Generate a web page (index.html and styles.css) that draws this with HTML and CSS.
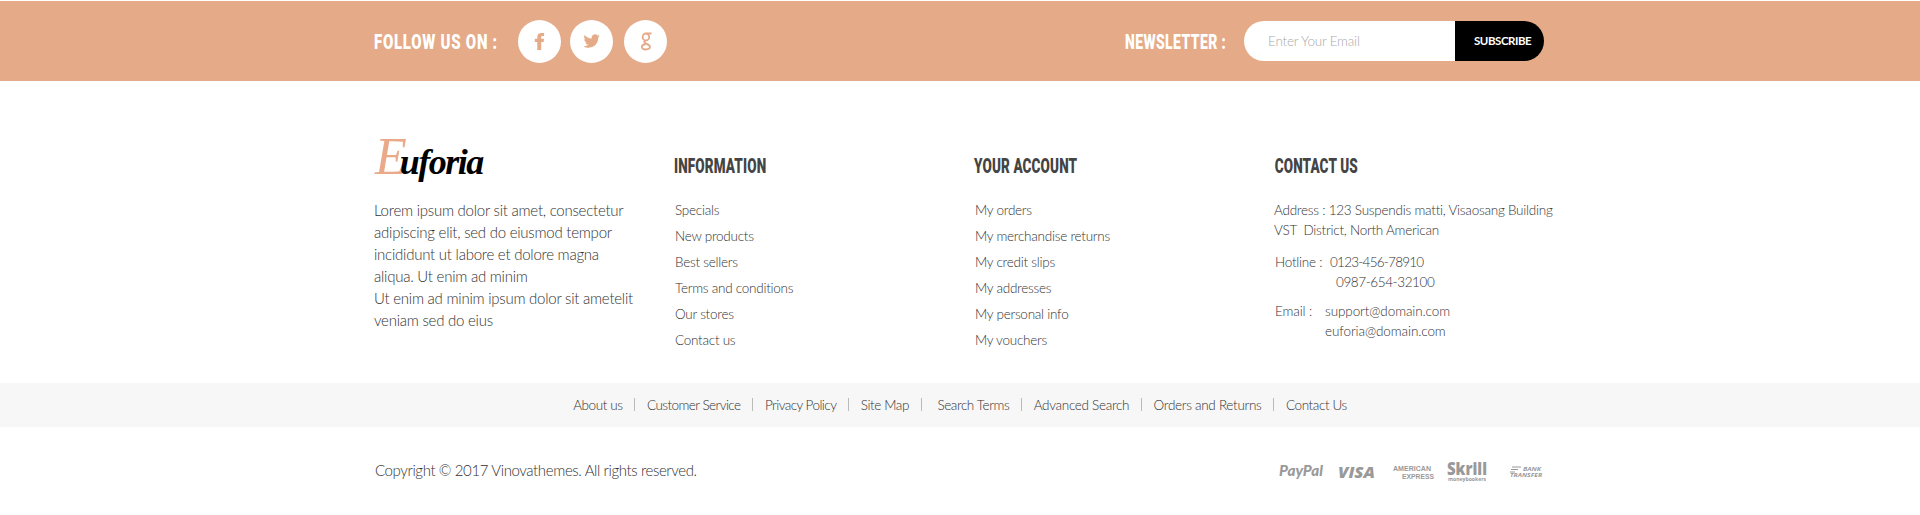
FILE: index.html
```html
<!DOCTYPE html>
<html lang="en">
<head>
<meta charset="utf-8">
<title>Euforia</title>
<link rel="stylesheet" href="styles.css">
</head>
<body>
<footer>
<section class="top">
  <h2 class="label follow">FOLLOW US ON :</h2>
  <div class="social">
    <a class="dot"><svg width="43" height="43" viewBox="0 0 43 43"><path d="M19.300 30v-8h-2.500v-3.300h2.500v-1.600c0-2.800 1.600-4.200 4.200-4.200h2.600V16h-1.600c-1 0-1.300.5-1.300 1.300v1.400h2.800l-.4 3.300h-2.400v8z"/></svg></a>
    <a class="dot"><svg width="43" height="43" viewBox="0 0 43 43"><path d="M29.900 15.900c-.6.3-1.200.5-1.900.6.7-.4 1.200-1.100 1.500-1.900-.7.4-1.400.7-2.100.8a3.400 3.400 0 0 0-5.800 3.100c-2.800-.1-5.300-1.500-7-3.500-.9 1.500-.5 3.500 1.100 4.500-.6 0-1.100-.2-1.500-.4 0 1.600 1.100 3 2.700 3.400-.5.1-1 .1-1.500 0 .4 1.300 1.700 2.300 3.100 2.300a6.800 6.800 0 0 1-5 1.400c1.500 1 3.300 1.500 5.200 1.500 6.200 0 9.800-5.200 9.500-10.100.7-.4 1.300-1 1.700-1.700z"/></svg></a>
    <a class="dot"><svg class="line" width="43" height="43" viewBox="0 0 43 43"><ellipse cx="21.900" cy="17" rx="3.300" ry="3.500"/><path d="M22.500 13.500h5M21 20.500c-1.500 1.300-.6 2.200 1.300 3.100 5.700 2.400 4.200 5.800-.3 5.900-5.200.1-5.800-4.300-.3-5.500"/></svg></a>
  </div>
  <h2 class="label news">NEWSLETTER :</h2>
  <form class="subscribe">
    <span class="field">Enter Your Email</span><span class="button">SUBSCRIBE</span>
  </form>
</section>
<section class="columns">
  <div class="about">
    <svg class="logo" width="112" height="60" viewBox="0 0 112 60"><text y="43"><tspan class="logo-cap" x="1">E</tspan><tspan class="logo-rest" dx="-7">uforia</tspan></text></svg>
    <p>Lorem ipsum dolor sit amet, consectetur<br>adipiscing elit, sed do eiusmod tempor<br>incididunt ut labore et dolore magna<br>aliqua. Ut enim ad minim<br>Ut enim ad minim ipsum dolor sit ametelit<br>veniam sed do eius</p>
  </div>
  <div class="links">
    <h3>INFORMATION</h3>
    <ul><li>Specials</li><li>New products</li><li>Best sellers</li><li>Terms and conditions</li><li>Our stores</li><li>Contact us</li></ul>
  </div>
  <div class="links">
    <h3>YOUR ACCOUNT</h3>
    <ul><li>My orders</li><li>My merchandise returns</li><li>My credit slips</li><li>My addresses</li><li>My personal info</li><li>My vouchers</li></ul>
  </div>
  <div class="contact">
    <h3>CONTACT US</h3>
    <p class="address">Address : 123 Suspendis matti, Visaosang Building<br>VST&nbsp; District, North American</p>
    <div class="row phone"><span class="term">Hotline :</span><div class="numbers">0123-456-78910<div class="second">0987-654-32100</div></div></div>
    <div class="row mail"><span class="term">Email :</span><div>support@domain.com<div>euforia@domain.com</div></div></div>
  </div>
</section>
<nav>
  <a>About us</a><i></i><a class="tight">Customer Service</a><i></i><a class="tight">Privacy Policy</a><i></i><a>Site Map</a><i></i><a class="wide">Search Terms</a><i></i><a class="loose">Advanced Search</a><i></i><a class="loose">Orders and Returns</a><i></i><a>Contact Us</a>
</nav>
<section class="bottom">
  <p>Copyright © 2017 Vinovathemes. All rights reserved.</p>
  <svg class="pay" width="270" height="30" viewBox="0 0 270 30">
    <text class="paypal" x="0" y="20" textLength="44" lengthAdjust="spacingAndGlyphs">PayPal</text>
    <text class="visa" x="59" y="21.500" textLength="37" lengthAdjust="spacingAndGlyphs">VISA</text>
    <text class="amex" x="114" y="14.500" textLength="38" lengthAdjust="spacingAndGlyphs">AMERICAN</text>
    <text class="amex" x="123" y="22.500" textLength="32" lengthAdjust="spacingAndGlyphs">EXPRESS</text>
    <text class="skrill" x="168" y="18.500" textLength="40" lengthAdjust="spacingAndGlyphs">Skrill</text>
    <text class="money" x="169" y="25" textLength="38" lengthAdjust="spacingAndGlyphs">moneybookers</text>
    <path d="M233 11h9M232 13.500h7M231 16h5" />
    <text class="bank" x="244" y="14.500" textLength="18" lengthAdjust="spacingAndGlyphs">BANK</text>
    <text class="bank" x="231" y="21" textLength="32" lengthAdjust="spacingAndGlyphs">TRANSFER</text>
  </svg>
</section>
</footer>
</body>
</html>
```
FILE: styles.css
```css
* { box-sizing: border-box; margin: 0; padding: 0; }
body { width: 1920px; height: 515px; overflow: hidden; background: #fff; color: #333; font-family: Lato, "Open Sans", sans-serif; font-weight: 300; }
ul { list-style: none; }
.top { display: flex; height: 80px; margin-top: 1px; padding: 0 376px 0 374px; align-items: center; background: #e5aa87; }
.label { width: 144px; height: 30px; padding-top: 1px; color: #fff; font: 900 21px/30px Roboto, sans-serif; white-space: nowrap; transform-origin: left; }
.follow { letter-spacing: 1px; transform: scaleX(.715); }
.social { display: flex; gap: 10px; }
.dot { display: block; width: 43px; height: 43px; border-radius: 50%; background: #fff; }
.dot:first-child { margin-right: -1px; }
.dot:last-child { margin-left: 1px; }
.dot svg { display: block; fill: #e5aa87; }
.dot .line { fill: none; stroke: #e5aa87; stroke-width: 1.800; }
.news { width: 119px; margin-left: auto; letter-spacing: .6px; transform: scaleX(.665); }
.subscribe { display: flex; width: 300px; height: 40px; border-radius: 20px; overflow: hidden; line-height: 40px; }
.field { width: 211px; padding-left: 24px; background: #fff; color: #aaa; font-size: 13.500px; letter-spacing: -.2px; }
.button { width: 89px; padding-left: 19px; background: #000; color: #fff; font-size: 11.500px; font-weight: 700; letter-spacing: -.45px; }
.columns { display: grid; grid-template-columns: 300px 300px 300px 300px; height: 301px; padding-left: 374px; }
.logo { display: block; margin-top: 50px; overflow: visible; }
.logo-cap { fill: #eaa989; font: italic 52px "Liberation Serif", serif; }
.logo-rest { fill: #000; font: italic 700 36px "Liberation Serif", serif; letter-spacing: -1.500px; }
.about p { margin-top: 8px; font-size: 15px; line-height: 22px; letter-spacing: -.24px; white-space: nowrap; }
h3 { height: 26px; margin-top: 72px; color: #444; font: 900 20px/26px Roboto, sans-serif; letter-spacing: .2px; white-space: nowrap; transform: scaleX(.675); transform-origin: left; }
.links ul { margin-top: 18px; padding-left: 1px; font-size: 13.500px; line-height: 26px; letter-spacing: -.25px; }
.contact { font-size: 13.500px; line-height: 20px; letter-spacing: -.24px; white-space: nowrap; }
.contact h3 { padding-left: 1px; }
.contact .address { margin-top: 21px; }
.row { display: flex; padding-left: 1px; }
.phone { margin-top: 12px; }
.mail { margin-top: 9px; letter-spacing: -.1px; }
.term { width: 55px; }
.numbers { letter-spacing: -.75px; }
.second { padding-left: 6px; letter-spacing: -.4px; }
.mail .term { width: 50px; }
nav { display: flex; height: 45px; padding-bottom: 1px; border-top: 1px solid #fff; justify-content: center; align-items: center; gap: 11.700px; background: #f7f7f7; font-size: 13.500px; letter-spacing: -.4px; }
nav i { width: 1px; height: 13px; background: #bbb; }
nav .tight { letter-spacing: -.55px; }
nav .loose { letter-spacing: -.3px; }
nav .wide { padding-left: 4px; }
.bottom { display: flex; justify-content: space-between; padding: 28px 371px 0 375px; }
.bottom p { font-size: 15px; line-height: 30px; letter-spacing: -.38px; }
.pay { margin-top: 1px; fill: #999; stroke: none; }
.pay path { stroke: #999; stroke-width: 1; }
.paypal { font: italic 900 15px Lato, sans-serif; }
.visa { font: italic 900 16px "Open Sans", sans-serif; }
.amex { font: 700 7.500px "Liberation Sans", sans-serif; }
.skrill { font: 900 17px "Open Sans", sans-serif; }
.money { font: 700 6px "Open Sans", sans-serif; }
.bank { font: italic 700 6px "Open Sans", sans-serif; }
```
